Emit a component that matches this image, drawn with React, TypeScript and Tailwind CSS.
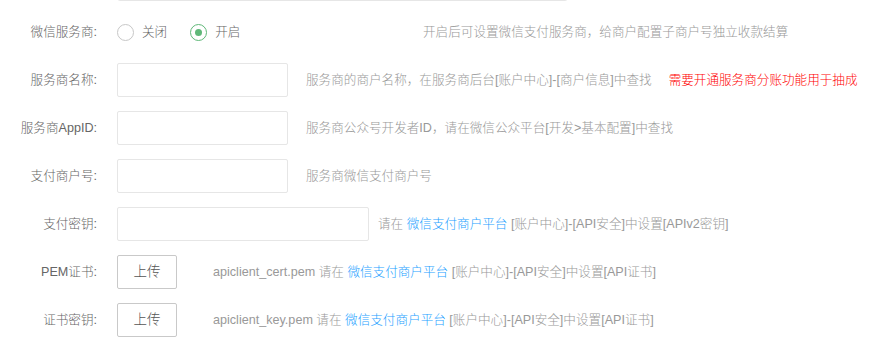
import type { ReactNode } from 'react'

const font = { fontFamily: '"Liberation Sans", "Noto Sans CJK SC", sans-serif' }

function Label({ children }: { children: ReactNode }) {
  return <div className="w-[117px] shrink-0 pr-[20px] text-right text-[#666]">{children}</div>
}

function Input({ wide }: { wide?: boolean }) {
  return (
    <div className={`${wide ? 'w-[252px]' : 'w-[171px]'} h-[34px] shrink-0 border border-[#e6e6e6] rounded-[2px] bg-white`} />
  )
}

function Link({ children }: { children: ReactNode }) {
  return <span className="text-[#1E9FFF]">{children}</span>
}

function UploadBtn() {
  return (
    <button className="w-[60px] h-[34px] shrink-0 border border-[#c9c9c9] rounded-[2px] bg-white text-[#555] text-[13.5px]">
      上传
    </button>
  )
}

export default function App() {
  return (
    <div className="w-[874px] h-[343px] overflow-hidden bg-white text-[12.6px] leading-none font-light" style={font}>
      <div className="-mt-[33px] flex flex-col gap-[14px]">
        {/* 上一行的输入框，只露出底边 */}
        <div className="h-[34px] flex items-center">
          <div className="w-[117px] shrink-0" />
          <div className="w-[451px] h-[34px] border border-[#e6e6e6] rounded-[3px]" />
        </div>

        <div className="h-[34px] flex items-center">
          <Label>微信服务商:</Label>
          <div className="flex items-center text-[#666] w-[306px] shrink-0">
            <span className="w-[17px] h-[17px] rounded-full border border-[#c7c7c7] shrink-0" />
            <span className="ml-[8px]">关闭</span>
            <span className="ml-[23px] w-[17px] h-[17px] rounded-full border border-[#5FB878] shrink-0 flex items-center justify-center">
              <span className="w-[7px] h-[7px] rounded-full bg-[#5FB878]" />
            </span>
            <span className="ml-[8px]">开启</span>
          </div>
          <span className="text-[#999]">开启后可设置微信支付服务商，给商户配置子商户号独立收款结算</span>
        </div>

        <div className="h-[34px] flex items-center">
          <Label>服务商名称:</Label>
          <Input />
          <span className="ml-[18px] text-[#999]">服务商的商户名称，在服务商后台[账户中心]-[商户信息]中查找</span>
          <span className="ml-[17px] text-[#ff0000]">需要开通服务商分账功能用于抽成</span>
        </div>

        <div className="h-[34px] flex items-center">
          <Label>服务商AppID:</Label>
          <Input />
          <span className="ml-[18px] text-[#999]">服务商公众号开发者ID，请在微信公众平台[开发&gt;基本配置]中查找</span>
        </div>

        <div className="h-[34px] flex items-center">
          <Label>支付商户号:</Label>
          <Input />
          <span className="ml-[18px] text-[#999]">服务商微信支付商户号</span>
        </div>

        <div className="h-[34px] flex items-center">
          <Label>支付密钥:</Label>
          <Input wide />
          <span className="ml-[9px] text-[#999]">
            请在 <Link>微信支付商户平台</Link> [账户中心]-[API安全]中设置[APIv2密钥]
          </span>
        </div>

        <div className="h-[34px] flex items-center">
          <Label>PEM证书:</Label>
          <UploadBtn />
          <span className="ml-[36px] text-[#999]">
            apiclient_cert.pem 请在 <Link>微信支付商户平台</Link> [账户中心]-[API安全]中设置[API证书]
          </span>
        </div>

        <div className="h-[34px] flex items-center">
          <Label>证书密钥:</Label>
          <UploadBtn />
          <span className="ml-[36px] text-[#999]">
            apiclient_key.pem 请在 <Link>微信支付商户平台</Link> [账户中心]-[API安全]中设置[API证书]
          </span>
        </div>
      </div>
    </div>
  )
}
